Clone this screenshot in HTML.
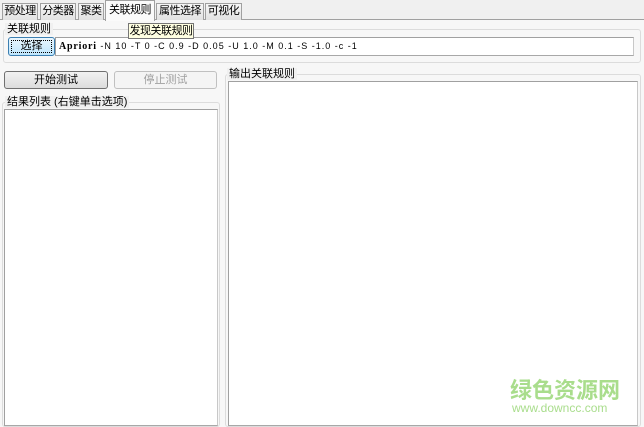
<html><head><style>
body{margin:0;width:644px;height:427px;background:#f0f0f0;position:relative;overflow:hidden;font:11px "Liberation Sans","Noto Sans CJK SC",sans-serif;color:#000}
div{position:absolute;box-sizing:border-box;white-space:nowrap}
.tab{top:3px;height:17px;border:1px solid #a0a0a0;border-bottom:none;background:linear-gradient(#f6f6f6,#e2e2e2);text-align:center;line-height:15px;font-size:11px;overflow:hidden;letter-spacing:-0.5px}
.grp{border:1px solid #dcdcdc;border-radius:3px}
.lbl{background:#f0f0f0;padding:0 2px;line-height:12px;font-size:11px}
.box{background:#fff;border:1px solid #a0a0a0;border-right-color:#c8c8c8;border-bottom-color:#a8a8a8}
.btn{border:1px solid #707070;border-radius:3px;background:linear-gradient(#f2f2f2,#dcdcdc);text-align:center;line-height:16px}
</style></head><body>
<div style="left:0;top:19px;width:644px;height:1px;background:#a0a0a0"></div>
<div style="left:0;top:20px;width:644px;height:407px;background:#f7f7f7"></div>
<div class="tab" style="left:2px;width:36px">预处理</div>
<div class="tab" style="left:40px;width:36px">分类器</div>
<div class="tab" style="left:78px;width:26px">聚类</div>
<div class="tab" style="left:105px;top:0;height:21px;width:50px;background:#fafafa;line-height:19px">关联规则</div>
<div class="tab" style="left:156px;width:48px">属性选择</div>
<div class="tab" style="left:205px;width:37px">可视化</div>

<div class="grp" style="left:3px;top:29px;width:638px;height:34px"></div>
<div class="lbl" style="left:5px;top:23px">关联规则</div>
<div class="btn" style="left:8px;top:37px;width:47px;height:19px;line-height:17px;border-color:#3c7fb1;outline:1px dotted #000;outline-offset:-4px;background:linear-gradient(#eaf6fd,#bee6fd)">选择</div>
<div class="box" style="left:55px;top:37px;width:579px;height:19px;line-height:17px;padding-left:3px;font-size:9px;font-family:'Liberation Sans',sans-serif;letter-spacing:1px"><b style="font-family:'Liberation Serif',serif;font-size:10px;letter-spacing:0.8px">Apriori</b> -N 10 -T 0 -C 0.9 -D 0.05 -U 1.0 -M 0.1 -S -1.0 -c -1</div>
<div style="left:128px;top:23px;width:66px;height:16px;background:#ffffe1;border:1px solid #767676;line-height:14px;text-align:center;font-size:11px;letter-spacing:-0.5px">发现关联规则</div>

<div class="btn" style="left:4px;top:71px;width:104px;height:18px">开始测试</div>
<div class="btn" style="left:114px;top:71px;width:103px;height:18px;border-color:#c0c0c0;background:#f4f4f4;color:#a0a0a0">停止测试</div>

<div class="grp" style="left:2px;top:102px;width:218px;height:325px"></div>
<div class="lbl" style="left:5px;top:96px">结果列表 (右键单击选项)</div>
<div class="box" style="left:4px;top:109px;width:214px;height:317px"></div>

<div class="grp" style="left:225px;top:74px;width:416px;height:353px"></div>
<div class="lbl" style="left:227px;top:68px">输出关联规则</div>
<div class="box" style="left:228px;top:81px;width:410px;height:345px"></div>

<div style="left:510px;top:373px;font-size:22px;font-weight:bold;color:#a9dd8c;letter-spacing:0px">绿色资源网</div>
<div style="left:512px;top:401px;font-size:12px;color:#a9dd8c">www.downcc.com</div>
</body></html>
